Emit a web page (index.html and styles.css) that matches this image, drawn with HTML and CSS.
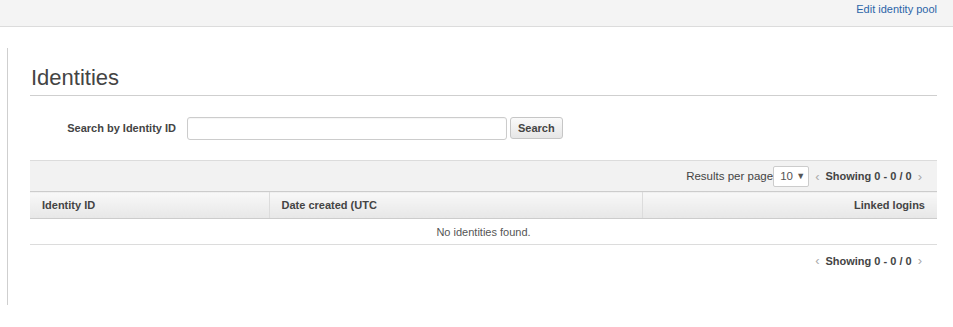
FILE: index.html
```html
<!DOCTYPE html>
<html lang="en">
<head>
    <meta charset="UTF-8">
    <meta name="viewport" content="width=device-width, initial-scale=1.0">
    <title>Identities</title>
    <link rel="stylesheet" href="styles.css">
</head>
<body>

    <div class="top-bar">
        <a href="#" class="top-link">Edit identity pool</a>
    </div>

    <div class="main">
        <h2 class="page-title">Identities</h2>

        <form class="search-row">
            <label class="search-label" for="identityId">Search by Identity ID</label>
            <input type="text" id="identityId" class="search-input">
            <button type="button" class="search-btn">Search</button>
        </form>

        <div class="table-toolbar">
            <span class="per-page-label">Results per page</span>
            <div class="per-page-select">10 <span class="caret">&#9660;</span></div>
            <div class="pager">
                <span class="chev">&lsaquo;</span>
                <span class="showing">Showing 0 - 0 / 0</span>
                <span class="chev">&rsaquo;</span>
            </div>
        </div>

        <table class="identities">
            <thead>
                <tr>
                    <th class="col-id">Identity ID</th>
                    <th class="col-date">Date created (UTC</th>
                    <th class="col-logins">Linked logins</th>
                </tr>
            </thead>
            <tbody>
                <tr>
                    <td colspan="3" class="empty">No identities found.</td>
                </tr>
            </tbody>
        </table>

        <div class="bottom-pager">
            <div class="pager">
                <span class="chev">&lsaquo;</span>
                <span class="showing">Showing 0 - 0 / 0</span>
                <span class="chev">&rsaquo;</span>
            </div>
        </div>
    </div>

</body>
</html>
```

FILE: styles.css
```css
body {
    margin: 0;
    font-family: 'Liberation Sans', Arial, sans-serif;
    font-size: 11px;
    color: #444;
    background-color: #fff;
}

/* Top bar */
.top-bar {
    height: 27px;
    box-sizing: border-box;
    background-color: #f4f4f4;
    border-bottom: 1px solid #dcdcdc;
    text-align: right;
    padding: 3px 16px 0 0;
}
.top-link {
    color: #2b64a8;
    text-decoration: none;
    font-size: 11px;
    line-height: 13px;
}

/* Main panel */
.main {
    margin: 21px 0 0 7px;
    height: 257px;
    box-sizing: border-box;
    border-left: 1px solid #cfcfcf;
    padding: 0 16px 0 22px;
    overflow: hidden;
}
.page-title {
    margin: 17px 0 0 0;
    padding: 0 0 4px 1px;
    font-size: 22px;
    line-height: 26px;
    font-weight: normal;
    color: #444;
    border-bottom: 1px solid #cfcfcf;
}

/* Search */
.search-row {
    display: flex;
    align-items: flex-start;
    margin: 21px 0 0 0;
}
.search-label {
    width: 146px;
    margin-right: 11px;
    text-align: right;
    font-weight: bold;
    color: #444;
    line-height: 23px;
}
.search-input {
    width: 320px;
    height: 23px;
    box-sizing: border-box;
    margin: 0;
    border: 1px solid #cccccc;
    border-radius: 3px;
    background-color: #fff;
    box-shadow: inset 0 1px 1px rgba(0,0,0,0.04);
}
.search-btn {
    margin: 0 0 0 3px;
    height: 22px;
    padding: 0 7px;
    font-family: inherit;
    font-size: 11px;
    font-weight: bold;
    color: #444;
    border: 1px solid #c6c6c6;
    border-radius: 3px;
    background: linear-gradient(#fafafa, #e6e6e6);
    cursor: pointer;
}

/* Toolbar above table */
.table-toolbar {
    display: flex;
    align-items: center;
    justify-content: flex-end;
    margin-top: 20px;
    height: 31px;
    box-sizing: border-box;
    background-color: #f2f2f2;
    border-top: 1px solid #dcdcdc;
    padding-right: 15px;
    font-size: 11px;
}
.per-page-label {
    color: #444;
    font-size: 11.5px;
}
.per-page-select {
    width: 36px;
    height: 21px;
    box-sizing: border-box;
    border: 1px solid #cccccc;
    border-radius: 2px;
    background-color: #fff;
    color: #555;
    font-size: 11.5px;
    line-height: 19px;
    padding-left: 6px;
    margin-right: 6px;
}
.caret {
    font-size: 9px;
    vertical-align: 1px;
    color: #555;
}
.pager {
    display: flex;
    align-items: center;
    gap: 4px;
}
.chev {
    color: #aaa;
    font-size: 13px;
    line-height: 13px;
}
.showing {
    font-weight: bold;
    color: #444;
    margin: 0 2px;
}

/* Table */
.identities {
    width: 100%;
    border-collapse: collapse;
}
.identities th {
    height: 27px;
    padding: 0 12px;
    text-align: left;
    font-size: 11px;
    font-weight: bold;
    color: #444;
    background: linear-gradient(#f8f8f8, #e7e7e7);
    border-top: 1px solid #cccccc;
    border-bottom: 1px solid #cccccc;
    border-left: 1px solid #dcdcdc;
    box-sizing: border-box;
}
.identities th.col-id {
    width: 239px;
    border-left: none;
}
.identities th.col-date {
    width: 373px;
}
.identities th.col-logins {
    text-align: right;
}
.identities td.empty {
    height: 25px;
    text-align: center;
    color: #555;
    border-bottom: 1px solid #dcdcdc;
    padding: 0;
}

.bottom-pager {
    display: flex;
    justify-content: flex-end;
    align-items: center;
    height: 31px;
    padding-right: 15px;
}
```
